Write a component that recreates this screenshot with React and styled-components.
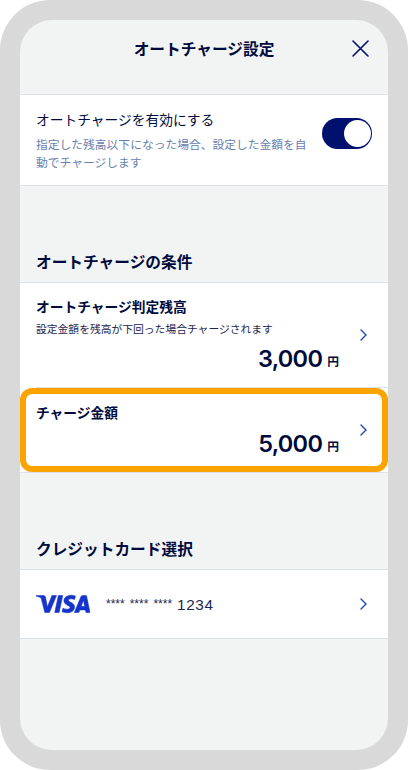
import React, { useState } from "react";
import styled, { createGlobalStyle } from "styled-components";
import { SiVisa } from "react-icons/si";

// style
const GlobalStyle = createGlobalStyle`
  * {
    box-sizing: border-box;
  }
  body {
    margin: 0;
    background: #fff;
    color: #000a3c;
    font-family: "Noto Sans CJK JP", sans-serif;
  }
`;

const Phone = styled.div`
  width: 408px;
  height: 770px;
  padding: 20px;
  border-radius: 50px;
  background: #d9d9d9;
`;

const Screen = styled.main`
  display: flex;
  flex-direction: column;
  height: 100%;
  border-radius: 32px;
  overflow: hidden;
  background: #f2f4f4;
`;

const Header = styled.header`
  display: grid;
  grid-template-columns: 1fr auto 1fr;
  align-items: center;
  height: 74px;
  padding: 0 19px 17px;
`;

const Title = styled.h1`
  grid-column: 2;
  margin: 0;
  font-size: 15.7px;
  font-weight: 700;
  line-height: 24px;
`;

const CloseButton = styled.button`
  justify-self: end;
  width: 17px;
  height: 17px;
  padding: 0;
  border: 0;
  background: none;

  svg {
    display: block;
  }
`;

const Panel = styled.section`
  border-top: 1px solid #dde1ec;
  border-bottom: 1px solid #dde1ec;
  background: #fff;
`;

const EnableRow = styled.div`
  display: flex;
  align-items: flex-start;
  justify-content: space-between;
  height: 90px;
  padding: 13px 16px 0;
`;

const EnableText = styled.div`
  width: 274px;
`;

const EnableLabel = styled.div`
  font-size: 13.74px;
  line-height: 22px;
`;

const Description = styled.p`
  margin: 5px 0 0;
  color: #6880b0;
  font-size: 11.78px;
  line-height: 17.5px;
`;

const Toggle = styled.button`
  display: flex;
  flex: none;
  justify-content: ${({ $on }) => ($on ? "flex-end" : "flex-start")};
  width: 50px;
  height: 31px;
  margin-top: 10px;
  padding: 2px 1.5px;
  border: 0;
  border-radius: 16px;
  background: ${({ $on }) => ($on ? "#00106e" : "#c4c8d4")};
`;

const Knob = styled.span`
  width: 27px;
  height: 27px;
  border-radius: 50%;
  background: #fff;
`;

const SectionHeading = styled.h2`
  display: flex;
  align-items: flex-end;
  height: 96px;
  margin: 0;
  padding: 0 16px 8px;
  font-size: 15.7px;
  font-weight: 700;
  line-height: 24px;
`;

const Row = styled.div`
  position: relative;
  display: flex;
  align-items: center;
  justify-content: space-between;
  height: ${({ $height }) => $height}px;
  padding: 0 19px 0 16px;
`;

const Divider = styled.div`
  height: 1px;
  margin-left: 16px;
  background: #dde1ec;
`;

// ring laid over the row to draw attention to it
const Highlight = styled.div`
  position: absolute;
  inset: 0;
  border: 6px solid #fba400;
  border-radius: 12px;
  pointer-events: none;
`;

const Condition = styled.div`
  display: flex;
  flex-direction: column;
  align-self: stretch;
  width: 303px;
  padding: ${({ $top }) => $top}px 0 ${({ $bottom }) => $bottom}px;
`;

const ConditionTitle = styled.h3`
  margin: 0;
  font-size: 13.74px;
  font-weight: 700;
  line-height: 20px;
`;

const Note = styled.p`
  margin: 4px 0 0;
  color: #1c2552;
  font-size: 10.79px;
  line-height: 16px;
`;

const Amount = styled.div`
  display: flex;
  align-items: baseline;
  justify-content: flex-end;
  gap: 5px;
  margin-top: auto;
  font-family: Inter, "Noto Sans CJK JP", sans-serif;
  font-size: 23.5px;
  font-weight: 600;
  line-height: 28px;
  letter-spacing: -0.7px;
`;

const Yen = styled.span`
  font-family: "Noto Sans CJK JP", sans-serif;
  font-size: 11.78px;
  font-weight: 700;
  line-height: 16px;
  letter-spacing: 0;
  transform: translateY(-1px);
`;

const Card = styled.div`
  display: flex;
  align-items: center;
  gap: 16px;
`;

const VisaLogo = styled(SiVisa)`
  width: 54px;
  height: 54px;
  color: #1434cb;
  stroke-width: 0.25;
`;

const CardNumber = styled.div`
  display: flex;
  gap: 5px;
  padding-top: 1px;
  color: #1c2552;
  font-family: "Liberation Sans", sans-serif;
  font-size: 15.3px;
  line-height: 20px;
  letter-spacing: 0.6px;
`;

const Mask = styled.span`
  font-size: 12px;
  line-height: 18px;
  letter-spacing: 0;
`;

const Close = () => (
  <svg width="17" height="17" viewBox="0 0 17 17" fill="none">
    <path d="M1 1L16 16M16 1L1 16" stroke="#00106e" strokeWidth="1.6" strokeLinecap="round" />
  </svg>
);

const Chevron = () => (
  <svg width="10" height="12" viewBox="0 0 10 12" fill="none">
    <path d="M2 1L7 6L2 11" stroke="#1f49b6" strokeWidth="1.4" strokeLinecap="round" />
  </svg>
);

function App() {
  const [enabled, setEnabled] = useState(true);

  return (
    <>
      <GlobalStyle />
      <Phone>
        <Screen>
          <Header>
            <Title>オートチャージ設定</Title>
            <CloseButton aria-label="閉じる">
              <Close />
            </CloseButton>
          </Header>

          <Panel>
            <EnableRow>
              <EnableText>
                <EnableLabel>オートチャージを有効にする</EnableLabel>
                <Description>
                  指定した残高以下になった場合、設定した金額を自動でチャージします
                </Description>
              </EnableText>
              <Toggle
                $on={enabled}
                role="switch"
                aria-checked={enabled}
                onClick={() => setEnabled(!enabled)}
              >
                <Knob />
              </Toggle>
            </EnableRow>
          </Panel>

          <SectionHeading>オートチャージの条件</SectionHeading>
          <Panel>
            <Row $height={104}>
              <Condition $top={13} $bottom={14}>
                <ConditionTitle>オートチャージ判定残高</ConditionTitle>
                <Note>設定金額を残高が下回った場合チャージされます</Note>
                <Amount>
                  3,000<Yen>円</Yen>
                </Amount>
              </Condition>
              <Chevron />
            </Row>
            <Divider />
            <Row $height={84}>
              <Condition $top={14} $bottom={14}>
                <ConditionTitle>チャージ金額</ConditionTitle>
                <Amount>
                  5,000<Yen>円</Yen>
                </Amount>
              </Condition>
              <Chevron />
              <Highlight />
            </Row>
          </Panel>

          <SectionHeading>クレジットカード選択</SectionHeading>
          <Panel>
            <Row $height={68}>
              <Card>
                <VisaLogo />
                <CardNumber>
                  <Mask>****</Mask>
                  <Mask>****</Mask>
                  <Mask>****</Mask>
                  <span>1234</span>
                </CardNumber>
              </Card>
              <Chevron />
            </Row>
          </Panel>
        </Screen>
      </Phone>
    </>
  );
}

export default App;
